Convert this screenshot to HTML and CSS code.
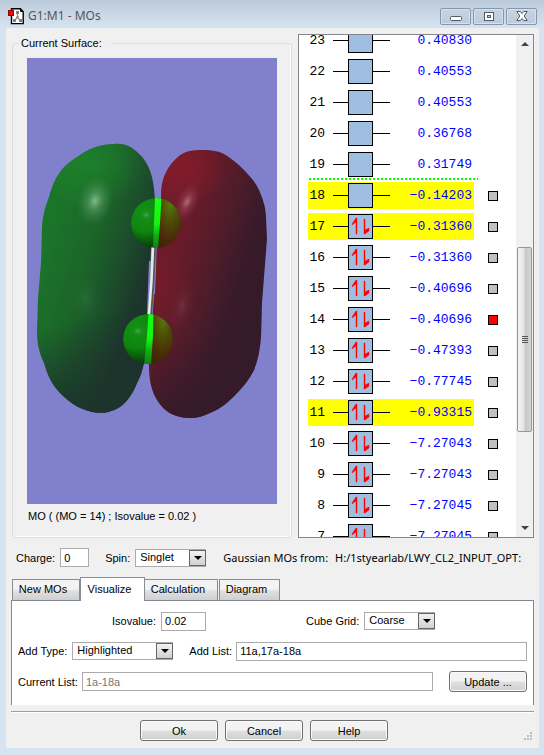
FILE: index.html
```html
<!DOCTYPE html>
<html lang="en">
<head>
<meta charset="utf-8">
<title>G1:M1 - MOs</title>
<link rel="stylesheet" href="styles.css">
</head>
<body>
<div class="window">
  <header class="titlebar">
    <svg class="app-icon" width="16" height="17" viewBox="0 0 16 17" aria-hidden="true">
      <path d="M3.500 .8H12.400L15.200 3.800V15.600H3.500Z" fill="#fff" stroke="#000" stroke-width="1.400"/>
      <path d="M12.500 1V3.500H15" fill="none" stroke="#000"/>
      <path d="M9.500 4V9.500L7 12M9.500 9.500L12 12" fill="none" stroke="#999" stroke-width="1.400"/>
      <path d="M8 3h3v3h-3zM8.500 8h2v2h-2zM5 11h3v3h-3zM11 11h3v3h-3z" fill="#808080"/>
      <rect x=".5" y="2.500" width="5" height="5" fill="#f00" stroke="#900"/>
    </svg>
    <h1 class="title">G1:M1 - MOs</h1>
    <div class="caption-buttons">
      <button class="caption-button" type="button" aria-label="Minimize">
        <svg width="12" height="12" viewBox="0 0 12 12"><rect x=".5" y="6.500" width="11" height="4" rx="1" fill="#fff" stroke="#535766"/></svg>
      </button>
      <button class="caption-button" type="button" aria-label="Maximize">
        <svg width="12" height="12" viewBox="0 0 12 12"><rect x="1.500" y="2.500" width="9" height="8" fill="#fff" stroke="#535766"/><rect x="4.500" y="5.500" width="3" height="2" fill="#b9c9da" stroke="#535766"/></svg>
      </button>
      <button class="caption-button" type="button" aria-label="Close">
        <svg width="12" height="12" viewBox="0 0 12 12"><path d="M.8 1.500H4.200L6 3.600 7.800 1.500H11.200L8.200 6 11.200 10.500H7.800L6 8.400 4.200 10.500H.8L3.800 6Z" fill="#fff" stroke="#535766"/></svg>
      </button>
    </div>
  </header>

  <main class="client">
    <section class="viewer">
      <fieldset class="surface">
        <legend>Current Surface:</legend>
        <svg class="scene" viewBox="0 0 250 446" role="img" aria-label="Molecular orbital 14">
          <defs>
            <linearGradient id="greenBody" gradientUnits="userSpaceOnUse" x1="15" y1="190" x2="124" y2="224">
              <stop offset="0" stop-color="#1b7529"/><stop offset=".4" stop-color="#1b6529"/>
              <stop offset=".72" stop-color="#1c4b2b"/><stop offset=".9" stop-color="#1c382c"/><stop offset="1" stop-color="#1c342c"/>
            </linearGradient>
            <linearGradient id="redBody" gradientUnits="userSpaceOnUse" x1="130" y1="190" x2="235" y2="222">
              <stop offset="0" stop-color="#701b29"/><stop offset=".25" stop-color="#651b29"/>
              <stop offset=".55" stop-color="#4d1c2a"/><stop offset=".8" stop-color="#391a2a"/><stop offset="1" stop-color="#351a29"/>
            </linearGradient>
            <linearGradient id="fall" gradientUnits="userSpaceOnUse" x1="0" y1="275" x2="20" y2="352">
              <stop offset="0" stop-color="#1c302c" stop-opacity="0"/><stop offset="1" stop-color="#1c342c" stop-opacity=".9"/>
            </linearGradient>
            <linearGradient id="fallRed" gradientUnits="userSpaceOnUse" x1="150" y1="275" x2="175" y2="345">
              <stop offset="0" stop-color="#351a29" stop-opacity="0"/><stop offset="1" stop-color="#351a29" stop-opacity=".9"/>
            </linearGradient>
            <radialGradient id="topGreen"><stop offset="0" stop-color="#1e8a2b" stop-opacity=".65"/><stop offset="1" stop-color="#1e8a2b" stop-opacity="0"/></radialGradient>
            <radialGradient id="topRed"><stop offset="0" stop-color="#8a1c2b" stop-opacity=".75"/><stop offset="1" stop-color="#8a1c2b" stop-opacity="0"/></radialGradient>
            <radialGradient id="shineGreen"><stop offset="0" stop-color="#8cc498" stop-opacity=".9"/><stop offset=".4" stop-color="#60a36d" stop-opacity=".5"/><stop offset="1" stop-color="#418c4d" stop-opacity="0"/></radialGradient>
            <radialGradient id="shineRed"><stop offset="0" stop-color="#c8808d" stop-opacity=".8"/><stop offset=".4" stop-color="#a14f60" stop-opacity=".45"/><stop offset="1" stop-color="#8a3a4b" stop-opacity="0"/></radialGradient>
            <radialGradient id="atomGreen" cx=".3" cy=".3" r=".75"><stop offset="0" stop-color="#129214"/><stop offset=".5" stop-color="#0f860f"/><stop offset=".8" stop-color="#08520a"/><stop offset="1" stop-color="#042f06"/></radialGradient>
            <radialGradient id="atomRed" cx=".5" cy=".15" r=".85"><stop offset="0" stop-color="#57780b"/><stop offset=".35" stop-color="#4e5008"/><stop offset=".75" stop-color="#4c2b08"/><stop offset="1" stop-color="#3e2608"/></radialGradient>
            <linearGradient id="atomCore" x1="0" y1="0" x2="0" y2="1"><stop offset="0" stop-color="#18ff18"/><stop offset=".5" stop-color="#12f512"/><stop offset=".75" stop-color="#10a814"/><stop offset="1" stop-color="#0e8212"/></linearGradient>
            <clipPath id="atomTop"><circle cx="129" cy="165" r="25"/></clipPath>
            <clipPath id="atomBottom"><circle cx="121" cy="281" r="25"/></clipPath>
            <path id="lobeGreen" d="M87 86C97 85 103 88 109 93C119 101 124 112 126 124C128 134 128 145 128 158L124 192L122 240C122 265 120 288 117 305C115 314 113 320 110 325C106 335 101 343 93 349C86 353 80 355 73 355C55 354 43 345 33 335C25 327 20 316 17 305C13 297 10 286 10 274L11 240L14 205L15 169C16 155 19 147 22 139C25 128 28 121 33 114C38 107 44 103 50 99C61 91 73 86 87 86Z"/>
            <path id="lobeRed" d="M177 92C185 92 191 93 197 96C204 100 210 105 217 112C223 118 229 125 232 132C236 141 239 150 239 160L240 181L237 219L235 245L234 279C233 291 231 302 227 312C222 322 216 329 210 335C202 344 193 351 183 355C177 358 170 360 163 360C157 360 152 359 147 357C139 354 134 348 130 342C126 335 124 329 123 322C121 307 122 291 124 279L129 212L130 180L134 139C134 124 137 117 142 109C146 103 151 98 157 95C163 92 170 92 177 92Z"/>
            <clipPath id="clipGreen"><use href="#lobeGreen"/></clipPath>
            <clipPath id="clipRed"><use href="#lobeRed"/></clipPath>
          </defs>
          <rect width="250" height="446" fill="#8080cc"/>
          <use href="#lobeGreen" fill="url(#greenBody)"/>
          <g clip-path="url(#clipGreen)">
            <ellipse cx="62" cy="105" rx="55" ry="45" fill="url(#topGreen)"/>
            <rect y="240" width="135" height="130" fill="url(#fall)"/>
            <ellipse cx="68" cy="143" rx="18" ry="25" transform="rotate(14 68 143)" fill="url(#shineGreen)"/>
            <ellipse cx="59" cy="241" rx="16" ry="25" fill="url(#shineGreen)" opacity=".14"/>
          </g>
          <use href="#lobeRed" fill="url(#redBody)"/>
          <g clip-path="url(#clipRed)">
            <ellipse cx="157" cy="112" rx="43" ry="36" fill="url(#topRed)"/>
            <ellipse cx="137" cy="230" rx="24" ry="48" fill="url(#topRed)" opacity=".35"/>
            <rect x="120" y="240" width="130" height="130" fill="url(#fallRed)"/>
            <ellipse cx="160" cy="144" rx="11" ry="21" transform="rotate(24 160 144)" fill="url(#shineRed)"/>
            <ellipse cx="155" cy="248" rx="12" ry="27" transform="rotate(12 155 248)" fill="url(#shineRed)" opacity=".25"/>
          </g>
          <path d="M123 203L121 256M128 206L127 236" stroke="#8080cc" stroke-width="2"/>
          <path d="M127.500 189L126 222L123.500 256" stroke="#555" stroke-width="3" fill="none"/>
          <path d="M126 189L124.500 222L122 256" stroke="#e8e8e8" stroke-width="2.600" fill="none"/>
          <g clip-path="url(#atomTop)">
            <circle cx="129" cy="165" r="25" fill="url(#atomGreen)"/>
            <path d="M132 138H156V192H130Z" fill="url(#atomRed)"/>
            <path d="M128 140H134.500L133 165L131 191H126L127 165Z" fill="url(#atomCore)"/>
            <ellipse cx="119" cy="157" rx="6" ry="5" fill="url(#shineGreen)" opacity=".55"/>
          </g>
          <g clip-path="url(#atomBottom)">
            <circle cx="121" cy="281" r="25" fill="url(#atomGreen)"/>
            <path d="M126 254H148V308H124Z" fill="url(#atomRed)"/>
            <path d="M121.500 255H126.500L126 278L124 307H117L120 278Z" fill="url(#atomCore)"/>
            <ellipse cx="111" cy="273" rx="6" ry="5" fill="url(#shineGreen)" opacity=".55"/>
          </g>
        </svg>
        <p class="scene-caption">MO ( (MO = 14) ; Isovalue = 0.02 )</p>
      </fieldset>

      <div class="orbitals">
        <ol class="levels" id="levels"></ol>
        <div class="scrollbar" aria-hidden="true">
          <svg class="scroll-arrow" width="8" height="4" viewBox="0 0 8 4"><path d="M4 0L8 4H0Z" fill="#444"/></svg>
          <div class="track-before"></div>
          <div class="thumb"><i></i><i></i><i></i><i></i></div>
          <div class="track-after"></div>
          <svg class="scroll-arrow" width="8" height="4" viewBox="0 0 8 4"><path d="M0 0H8L4 4Z" fill="#444"/></svg>
        </div>
      </div>
    </section>

    <section class="settings">
      <label for="charge">Charge:</label>
      <input class="field charge" id="charge" type="text" value="0">
      <label for="spin">Spin:</label>
      <span class="combo spin"><select id="spin"><option>Singlet</option></select><span class="drop"></span></span>
      <p class="source"><span>Gaussian MOs from:</span><span class="path">H:/1styearlab/LWY_CL2_INPUT_OPT:</span></p>
    </section>

    <nav class="tabs" role="tablist">
      <button class="tab tab-new" type="button" role="tab">New MOs</button>
      <button class="tab tab-active" type="button" role="tab" aria-selected="true">Visualize</button>
      <button class="tab tab-calc" type="button" role="tab">Calculation</button>
      <button class="tab tab-diagram" type="button" role="tab">Diagram</button>
    </nav>

    <section class="panel">
      <div class="row row-grid">
        <label for="isovalue">Isovalue:</label>
        <input class="field isovalue" id="isovalue" type="text" value="0.02">
        <label class="cube-label" for="cube">Cube Grid:</label>
        <span class="combo cube"><select id="cube"><option>Coarse</option></select><span class="drop"></span></span>
      </div>
      <div class="row">
        <label for="type">Add Type:</label>
        <span class="combo type"><select id="type"><option>Highlighted</option></select><span class="drop"></span></span>
        <label class="list-label" for="list">Add List:</label>
        <input class="field grow" id="list" type="text" value="11a,17a-18a">
      </div>
      <div class="row">
        <label class="current-label" for="current">Current List:</label>
        <input class="field grow" id="current" type="text" value="1a-18a" disabled>
        <button class="push update" type="button">Update ...</button>
      </div>
    </section>

    <footer class="actions">
      <button class="push" type="button">Ok</button>
      <button class="push" type="button">Cancel</button>
      <button class="push" type="button">Help</button>
      <svg class="grip" width="9" height="9" viewBox="0 0 9 9" fill="#bbb" aria-hidden="true"><path d="M7 0h2v2h-2zM7 3h2v2h-2zM4 3h2v2h-2zM7 6h2v2h-2zM4 6h2v2h-2zM1 6h2v2h-2z"/></svg>
    </footer>
  </main>
</div>
<script src="levels.js"></script>
</body>
</html>
```

FILE: styles.css
```css
* { box-sizing: border-box; }

body {
  margin: 0;
  background: #d6e4f1;
  color: #000;
  font: 11px/14px "Liberation Sans", Arial, sans-serif;
}

h1, p, ol { margin: 0; padding: 0; font: inherit; }
button, input, select { font: inherit; color: inherit; }

.window {
  display: flex;
  flex-direction: column;
  min-height: 100vh;
  padding: 0 5px 7px 6px;
  background: linear-gradient(#bccbda, #d6e4f1 28px);
}

.titlebar {
  display: flex;
  align-items: center;
  height: 28px;
  padding: 4px 2px 0;
}
.app-icon { flex: none; }
.title {
  flex: 1;
  margin-left: 4px;
  color: #555;
  font: 12px/16px "Noto Sans", "Open Sans", sans-serif;
}
.caption-buttons { display: flex; gap: 2px; }
.caption-button {
  display: grid;
  place-items: center;
  width: 31px;
  height: 17px;
  padding: 0;
  border: 1px solid #8797ab;
  border-radius: 2px;
  background: linear-gradient(#c6d4e2, #bccbdc);
  box-shadow: inset 0 0 0 1px #d8e2ec;
}

.client {
  flex: 1;
  display: flex;
  flex-direction: column;
  padding: 6px 5px 0;
  background: #f0f0f0;
}

.viewer {
  display: grid;
  grid-template-columns: 281px 1fr;
  gap: 6px;
}

.surface {
  min-width: 0;
  margin: 2px 0 0 1px;
  padding: 8px 14px 14px;
  border: 1px solid #d5dfe5;
  border-radius: 3px;
  box-shadow: inset -1px -1px #fff;
}
.surface legend { margin-left: -8px; padding: 0 9px 0 2px; }
.scene { display: block; width: 100%; height: auto; }
.scene-caption { margin-top: 5px; padding-left: 1px; }

.orbitals {
  contain: size;
  display: flex;
  overflow: hidden;
  border: 1px solid #828790;
  background: #fff;
}
.levels {
  flex: 1;
  margin-top: -10px;
  padding-left: 9px;
  list-style: none;
  font: 13px/27px "Liberation Mono", monospace;
}
.level {
  display: flex;
  align-items: center;
  height: 31px;
}
.lane {
  display: grid;
  grid-template-columns: 17px 57px 1fr;
  column-gap: 8px;
  align-items: center;
  width: 166px;
  height: 27px;
  padding-right: 2px;
}
.level.highlighted .lane { background: #ff0; }
.number { text-align: right; }
.energy { color: #00f; text-align: right; }
.glyph { display: block; }
.homo-gap { position: relative; }
.homo-gap::after {
  content: "";
  position: absolute;
  bottom: 0;
  left: 1px;
  width: 169px;
  height: 2px;
  background: repeating-linear-gradient(90deg, #0f0 0 2px, transparent 2px 4px);
}
.pick {
  appearance: none;
  width: 10px;
  height: 10px;
  margin: 0 0 0 14px;
  border: 1px solid #000;
  background: #c0c0c0;
}
.pick:checked { background: #f00; }

.scrollbar {
  display: flex;
  flex-direction: column;
  align-items: stretch;
  width: 17px;
  padding: 7px 1px;
  background: #f0f0f0;
}
.scroll-arrow { align-self: center; flex: none; }
.track-before { flex: 203; }
.track-after { flex: 95; }
.thumb {
  flex: 184;
  display: flex;
  flex-direction: column;
  align-items: center;
  justify-content: center;
  gap: 1px;
  border: 1px solid #979797;
  border-radius: 2px;
  background: linear-gradient(90deg, #f4f4f4, #e4e4e4 45%, #c8c8c8 55%, #d4d4d4);
}
.thumb i { width: 6px; height: 1px; background: #555; }

.settings {
  display: flex;
  align-items: center;
  margin-top: 10px;
  padding: 0 6px 0 5px;
}
.field {
  min-width: 0;
  height: 19px;
  padding: 0 3px;
  border: 1px solid #ababab;
  border-radius: 0;
  background: #fff;
}
.field:disabled { color: #777; }
.charge { width: 29px; margin: 0 16px 0 5px; }

.combo {
  position: relative;
  flex: none;
  display: flex;
  height: 18px;
}
.combo select {
  appearance: none;
  width: 100%;
  padding: 0 18px 2px 4px;
  border: 1px solid #ababab;
  border-radius: 0;
  background: #fff;
}
.drop {
  position: absolute;
  top: 1px;
  right: 0;
  display: grid;
  place-items: center;
  width: 17px;
  height: 16px;
  border: 1px solid #666;
  background: linear-gradient(#f2f2f2, #d0d0d0);
  pointer-events: none;
}
.drop::after {
  content: "";
  border: solid transparent;
  border-width: 4px 4px 0;
  border-top-color: #000;
}
.spin { width: 71px; margin: 0 17px 0 5px; }

.source {
  flex: 1;
  display: flex;
  gap: 7px;
  min-width: 0;
  overflow: hidden;
  white-space: nowrap;
  font: 11px/16px "Noto Sans", "Open Sans", sans-serif;
}
.path { flex: 1; overflow: hidden; }

.tabs {
  display: flex;
  align-items: flex-end;
  margin-top: 10px;
  padding-left: 1px;
}
.tab {
  height: 21px;
  padding: 0 6px 2px 0;
  border: 1px solid #898c95;
  border-bottom: 0;
  background: linear-gradient(#f3f3f3 45%, #e0e0e0 55%, #cfcfcf);
}
.tab-new { width: 68px; }
.tab-active {
  position: relative;
  width: 65px;
  height: 24px;
  margin-bottom: -1px;
  background: #fff;
}
.tab-calc { width: 73px; margin-right: 1px; border-left: 0; }
.tab-diagram { width: 61px; }

.panel {
  display: flex;
  flex-direction: column;
  gap: 10px;
  padding: 10px 6px 13px;
  border: 1px solid #828790;
  border-bottom: 0;
  background: #fff;
}
.row { display: flex; align-items: center; min-height: 20px; }
.row-grid { padding-left: 94px; }
.isovalue { width: 45px; margin-left: 5px; }
.cube-label { margin-left: 100px; }
.cube { width: 71px; margin-left: 5px; }
.type { width: 101px; margin: 0 16px 0 5px; }
.grow { flex: 1; }
.list-label, .current-label { margin-right: 4px; }

.push {
  width: 78px;
  height: 21px;
  padding: 0;
  border: 1px solid #707070;
  border-radius: 3px;
  background: linear-gradient(#f3f3f3 48%, #e0e0e0 52%, #cfcfcf);
  box-shadow: inset 0 0 0 1px #fafafa;
}
.update { margin-left: 16px; }

.actions {
  position: relative;
  display: flex;
  justify-content: center;
  gap: 7px;
  margin-top: 6px;
  padding: 8px 17px 7px 0;
  border-top: 1px solid #a0a0a0;
  box-shadow: inset 0 1px #fff;
}
.grip { position: absolute; right: 2px; bottom: 7px; }
```

FILE: levels.js
```js
const levels = [
  [23, "0.40830"], [22, "0.40553"], [21, "0.40553"], [20, "0.36768"],
  [19, "0.31749"], [18, "-0.14203"], [17, "-0.31360"], [16, "-0.31360"],
  [15, "-0.40696"], [14, "-0.40696"], [13, "-0.47393"], [12, "-0.77745"],
  [11, "-0.93315"], [10, "-7.27043"], [9, "-7.27043"], [8, "-7.27045"],
  [7, "-7.27045"]
];
const highlighted = [11, 17, 18];
const current = 14;
const electrons = `
  <path d="M23 4H24V20H23V8L19 11V10ZM31 5H32V16L36 14V17L32 20H31Z" fill="#f00" stroke="#f00" stroke-width=".4"/>`;

document.getElementById("levels").innerHTML = levels.map(([n, energy]) => `
  <li class="level${highlighted.includes(n) ? " highlighted" : ""}${n === 19 ? " homo-gap" : ""}">
    <span class="lane">
      <span class="number">${n}</span>
      <svg class="glyph" width="57" height="25" viewBox="0 0 57 25">
        <path d="M0 12.500H57" stroke="#000"/>
        <rect x="15.500" y=".5" width="24" height="24" fill="#a0bfe0" stroke="#000"/>
        ${n <= 17 ? electrons : ""}
      </svg>
      <span class="energy">${energy.replace("-", "−")}</span>
    </span>
    ${n <= 18 ? `<input class="pick" type="checkbox" aria-label="Orbital ${n}"${n === current ? " checked" : ""}>` : ""}
  </li>`).join("");
```
